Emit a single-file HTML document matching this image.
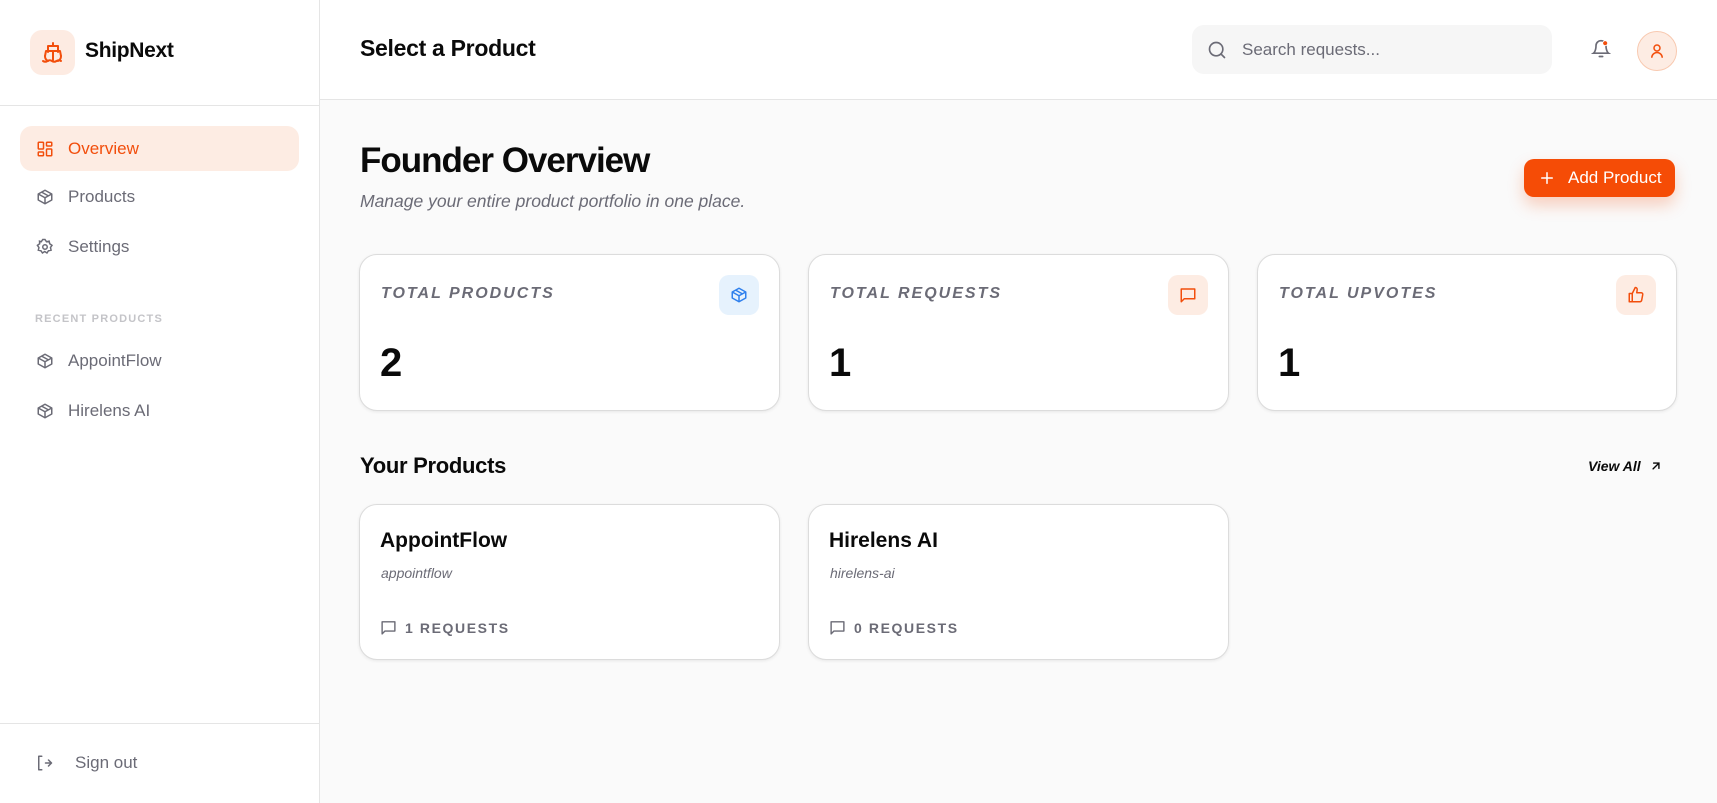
<!DOCTYPE html>
<html><head><meta charset="utf-8"><style>
*{box-sizing:border-box;margin:0;padding:0}
body{width:1717px;height:803px;overflow:hidden;font-family:"Liberation Sans",sans-serif;background:#fafafa;position:relative;color:#0a0a0a}
.abs{position:absolute}
.side{left:0;top:0;width:320px;height:803px;background:#fff;border-right:1px solid #e5e5e5}
.nav{position:absolute;left:20px;width:279px;height:45px;border-radius:12px;display:flex;align-items:center;padding-left:16px;font-size:17px;color:#6b6b76;font-weight:500}
.nav svg{margin-right:14px}
.card{position:absolute;background:#fff;border:1px solid #dcdcdc;border-radius:18px;box-shadow:0 1px 3px rgba(0,0,0,.08)}
.lbl{position:absolute;left:21px;top:30px;font-size:16px;font-weight:bold;font-style:italic;letter-spacing:2px;color:#6b6b76}
.num{position:absolute;left:20px;top:86px;font-size:40px;font-weight:bold}
.ib{position:absolute;right:20px;top:20px;width:40px;height:40px;border-radius:10px;display:flex;align-items:center;justify-content:center}
.pt{position:absolute;left:20px;top:24px;font-size:21px;font-weight:bold}
.ps{position:absolute;left:21px;top:60px;font-size:14px;font-style:italic;color:#6b6b76}
.pr{position:absolute;left:20px;top:114px;font-size:14px;font-weight:bold;letter-spacing:1.6px;color:#6b6b76;display:flex;align-items:center}
.pr svg{margin-right:8px}
</style></head><body>
<div class="abs side">
  <div class="abs" style="left:30px;top:30px;width:45px;height:45px;border-radius:12px;background:#fdebe2;display:flex;align-items:center;justify-content:center">
    <svg width="24" height="24" viewBox="0 0 24 24" fill="none" stroke="#f24e0c" stroke-width="2" stroke-linecap="round" stroke-linejoin="round"><path d="M12 2v3M7 5h10v6M7 11V5M4 15l1-5h14l1 5"/><path d="M12 11v8"/><path d="M2 20c1.5 1 3 1 4.5 0s3-1 4.5 0 3 1 4.5 0 3-1 4.5 0"/><path d="M4 15c0 2 1 4 3 5M20 15c0 2-1 4-3 5"/></svg>
  </div>
  <div class="abs" style="left:85px;top:39px;font-size:21px;font-weight:bold;letter-spacing:-.3px">ShipNext</div>
  <div class="abs" style="left:0;top:105px;width:320px;border-top:1px solid #e5e5e5"></div>
  <div class="nav" style="top:126px;background:#fdece3;color:#f24e0c">
    <svg width="18" height="18" viewBox="0 0 24 24" fill="none" stroke="#f24e0c" stroke-width="2"><rect x="3" y="3" width="7" height="9" rx="1"/><rect x="14" y="3" width="7" height="5" rx="1"/><rect x="14" y="12" width="7" height="9" rx="1"/><rect x="3" y="16" width="7" height="5" rx="1"/></svg>Overview</div>
  <div class="nav" style="top:174px"><svg width="18" height="18" viewBox="0 0 24 24" fill="none" stroke="#6b6b76" stroke-width="2" stroke-linejoin="round"><path d="M21 8 12 3 3 8v8l9 5 9-5z"/><path d="M3 8l9 5 9-5M12 13v8M7.5 5.5l9 5"/></svg>Products</div>
  <div class="nav" style="top:224px"><svg width="18" height="18" viewBox="0 0 24 24" fill="none" stroke="#6b6b76" stroke-width="2"><circle cx="12" cy="12" r="3"/><path d="M12 2l2 3 3.5-.8.8 3.5 3 2-2 3 .8 3.5-3.5.8-2 3-3-2-3 2-2-3-3.5-.8.8-3.5-2-3 3-2-.2-3.5L7 5l2-3z"/></svg>Settings</div>
  <div class="abs" style="left:35px;top:313px;font-size:11px;font-weight:bold;letter-spacing:1.2px;color:#c4c4c8">RECENT PRODUCTS</div>
  <div class="nav" style="top:338px"><svg width="18" height="18" viewBox="0 0 24 24" fill="none" stroke="#6b6b76" stroke-width="2" stroke-linejoin="round"><path d="M21 8 12 3 3 8v8l9 5 9-5z"/><path d="M3 8l9 5 9-5M12 13v8M7.5 5.5l9 5"/></svg>AppointFlow</div>
  <div class="nav" style="top:388px"><svg width="18" height="18" viewBox="0 0 24 24" fill="none" stroke="#6b6b76" stroke-width="2" stroke-linejoin="round"><path d="M21 8 12 3 3 8v8l9 5 9-5z"/><path d="M3 8l9 5 9-5M12 13v8M7.5 5.5l9 5"/></svg>Hirelens AI</div>
  <div class="abs" style="left:0;top:723px;width:320px;border-top:1px solid #e5e5e5"></div>
  <div class="nav" style="top:740px;padding-left:15px"><svg width="18" height="18" viewBox="0 0 24 24" fill="none" stroke="#6b6b76" stroke-width="2" stroke-linecap="round" stroke-linejoin="round" style="margin-right:22px"><path d="M9 21H5V3h4M14 12h7M18 8l4 4-4 4"/></svg>Sign out</div>
</div>
<div class="abs" style="left:320px;top:0;width:1397px;height:100px;background:#fff;border-bottom:1px solid #e5e5e5"></div>
<div class="abs" style="left:360px;top:35px;font-size:23px;font-weight:bold;letter-spacing:-.3px">Select a Product</div>
<div class="abs" style="left:1192px;top:25px;width:360px;height:49px;border-radius:12px;background:#f6f6f6;display:flex;align-items:center;padding-left:15px;font-size:17px;color:#6b6b76">
  <svg width="20" height="20" viewBox="0 0 24 24" fill="none" stroke="#6b6b76" stroke-width="2" stroke-linecap="round" style="margin-right:15px"><circle cx="11" cy="11" r="8"/><path d="M21 21l-4.3-4.3"/></svg>Search requests...</div>
<svg class="abs" style="left:1591px;top:39px" width="20" height="20" viewBox="0 0 24 24" fill="none" stroke="#6b6b76" stroke-width="2" stroke-linecap="round"><path d="M6 8a6 6 0 0 1 12 0c0 7 3 9 3 9H3s3-2 3-9M10 21h4"/><circle cx="17" cy="5" r="3" fill="#f24e0c" stroke="#fff" stroke-width="1"/></svg>
<div class="abs" style="left:1637px;top:31px;width:40px;height:40px;border-radius:50%;background:#fdece3;border:1px solid #f8c9b0;display:flex;align-items:center;justify-content:center"><svg width="18" height="18" viewBox="0 0 24 24" fill="none" stroke="#f24e0c" stroke-width="2"><circle cx="12" cy="8" r="4"/><path d="M5 21a7 7 0 0 1 14 0"/></svg></div>

<div class="abs" style="left:360px;top:141px;font-size:35px;font-weight:bold;letter-spacing:-1px">Founder Overview</div>
<div class="abs" style="left:360px;top:191px;font-size:17.5px;font-style:italic;color:#6b6b76">Manage your entire product portfolio in one place.</div>
<div class="abs" style="left:1524px;top:159px;width:151px;height:38px;border-radius:10px;background:#f54c06;box-shadow:0 8px 16px rgba(245,76,6,.25);color:#fff;font-size:17px;font-weight:500;display:flex;align-items:center;padding-left:14px">
  <svg width="18" height="18" viewBox="0 0 24 24" fill="none" stroke="#fff" stroke-width="2" stroke-linecap="round" style="margin-right:12px"><path d="M12 5v14M5 12h14"/></svg>Add Product</div>

<div class="card" style="left:359px;top:254px;width:421px;height:157px"><div class="lbl">TOTAL PRODUCTS</div><div class="ib" style="background:#e6f2fd"><svg width="18" height="18" viewBox="0 0 24 24" fill="none" stroke="#2f80ed" stroke-width="2" stroke-linejoin="round"><path d="M21 8 12 3 3 8v8l9 5 9-5z"/><path d="M3 8l9 5 9-5M12 13v8M7.5 5.5l9 5"/></svg></div><div class="num">2</div></div>
<div class="card" style="left:808px;top:254px;width:421px;height:157px"><div class="lbl">TOTAL REQUESTS</div><div class="ib" style="background:#fdece3"><svg width="18" height="18" viewBox="0 0 24 24" fill="none" stroke="#f24e0c" stroke-width="2" stroke-linejoin="round"><path d="M3 4h18v13H7l-4 4z"/></svg></div><div class="num">1</div></div>
<div class="card" style="left:1257px;top:254px;width:420px;height:157px"><div class="lbl">TOTAL UPVOTES</div><div class="ib" style="background:#fdece3"><svg width="18" height="18" viewBox="0 0 24 24" fill="none" stroke="#f24e0c" stroke-width="2" stroke-linejoin="round"><path d="M7 10v11M3 10h4v11H3zM7 10l4-8c2 0 3 1.5 2.5 3.5L13 9h6a2 2 0 0 1 2 2.3l-1.4 7.5A2.5 2.5 0 0 1 17 21H7"/></svg></div><div class="num">1</div></div>

<div class="abs" style="left:360px;top:453px;font-size:22px;font-weight:bold;letter-spacing:-.3px">Your Products</div>
<div class="abs" style="left:1588px;top:458px;font-size:14px;font-weight:bold;font-style:italic;display:flex;align-items:center">View All<svg width="14" height="14" viewBox="0 0 24 24" fill="none" stroke="#0a0a0a" stroke-width="2.4" stroke-linecap="round" style="margin-left:8px"><path d="M7 17 17 7M8 7h9v9"/></svg></div>

<div class="card" style="left:359px;top:504px;width:421px;height:156px"><div class="pt">AppointFlow</div><div class="ps">appointflow</div><div class="pr"><svg width="17" height="17" viewBox="0 0 24 24" fill="none" stroke="#6b6b76" stroke-width="2" stroke-linejoin="round"><path d="M3 4h18v13H7l-4 4z"/></svg>1 REQUESTS</div></div>
<div class="card" style="left:808px;top:504px;width:421px;height:156px"><div class="pt">Hirelens AI</div><div class="ps">hirelens-ai</div><div class="pr"><svg width="17" height="17" viewBox="0 0 24 24" fill="none" stroke="#6b6b76" stroke-width="2" stroke-linejoin="round"><path d="M3 4h18v13H7l-4 4z"/></svg>0 REQUESTS</div></div>
</body></html>
